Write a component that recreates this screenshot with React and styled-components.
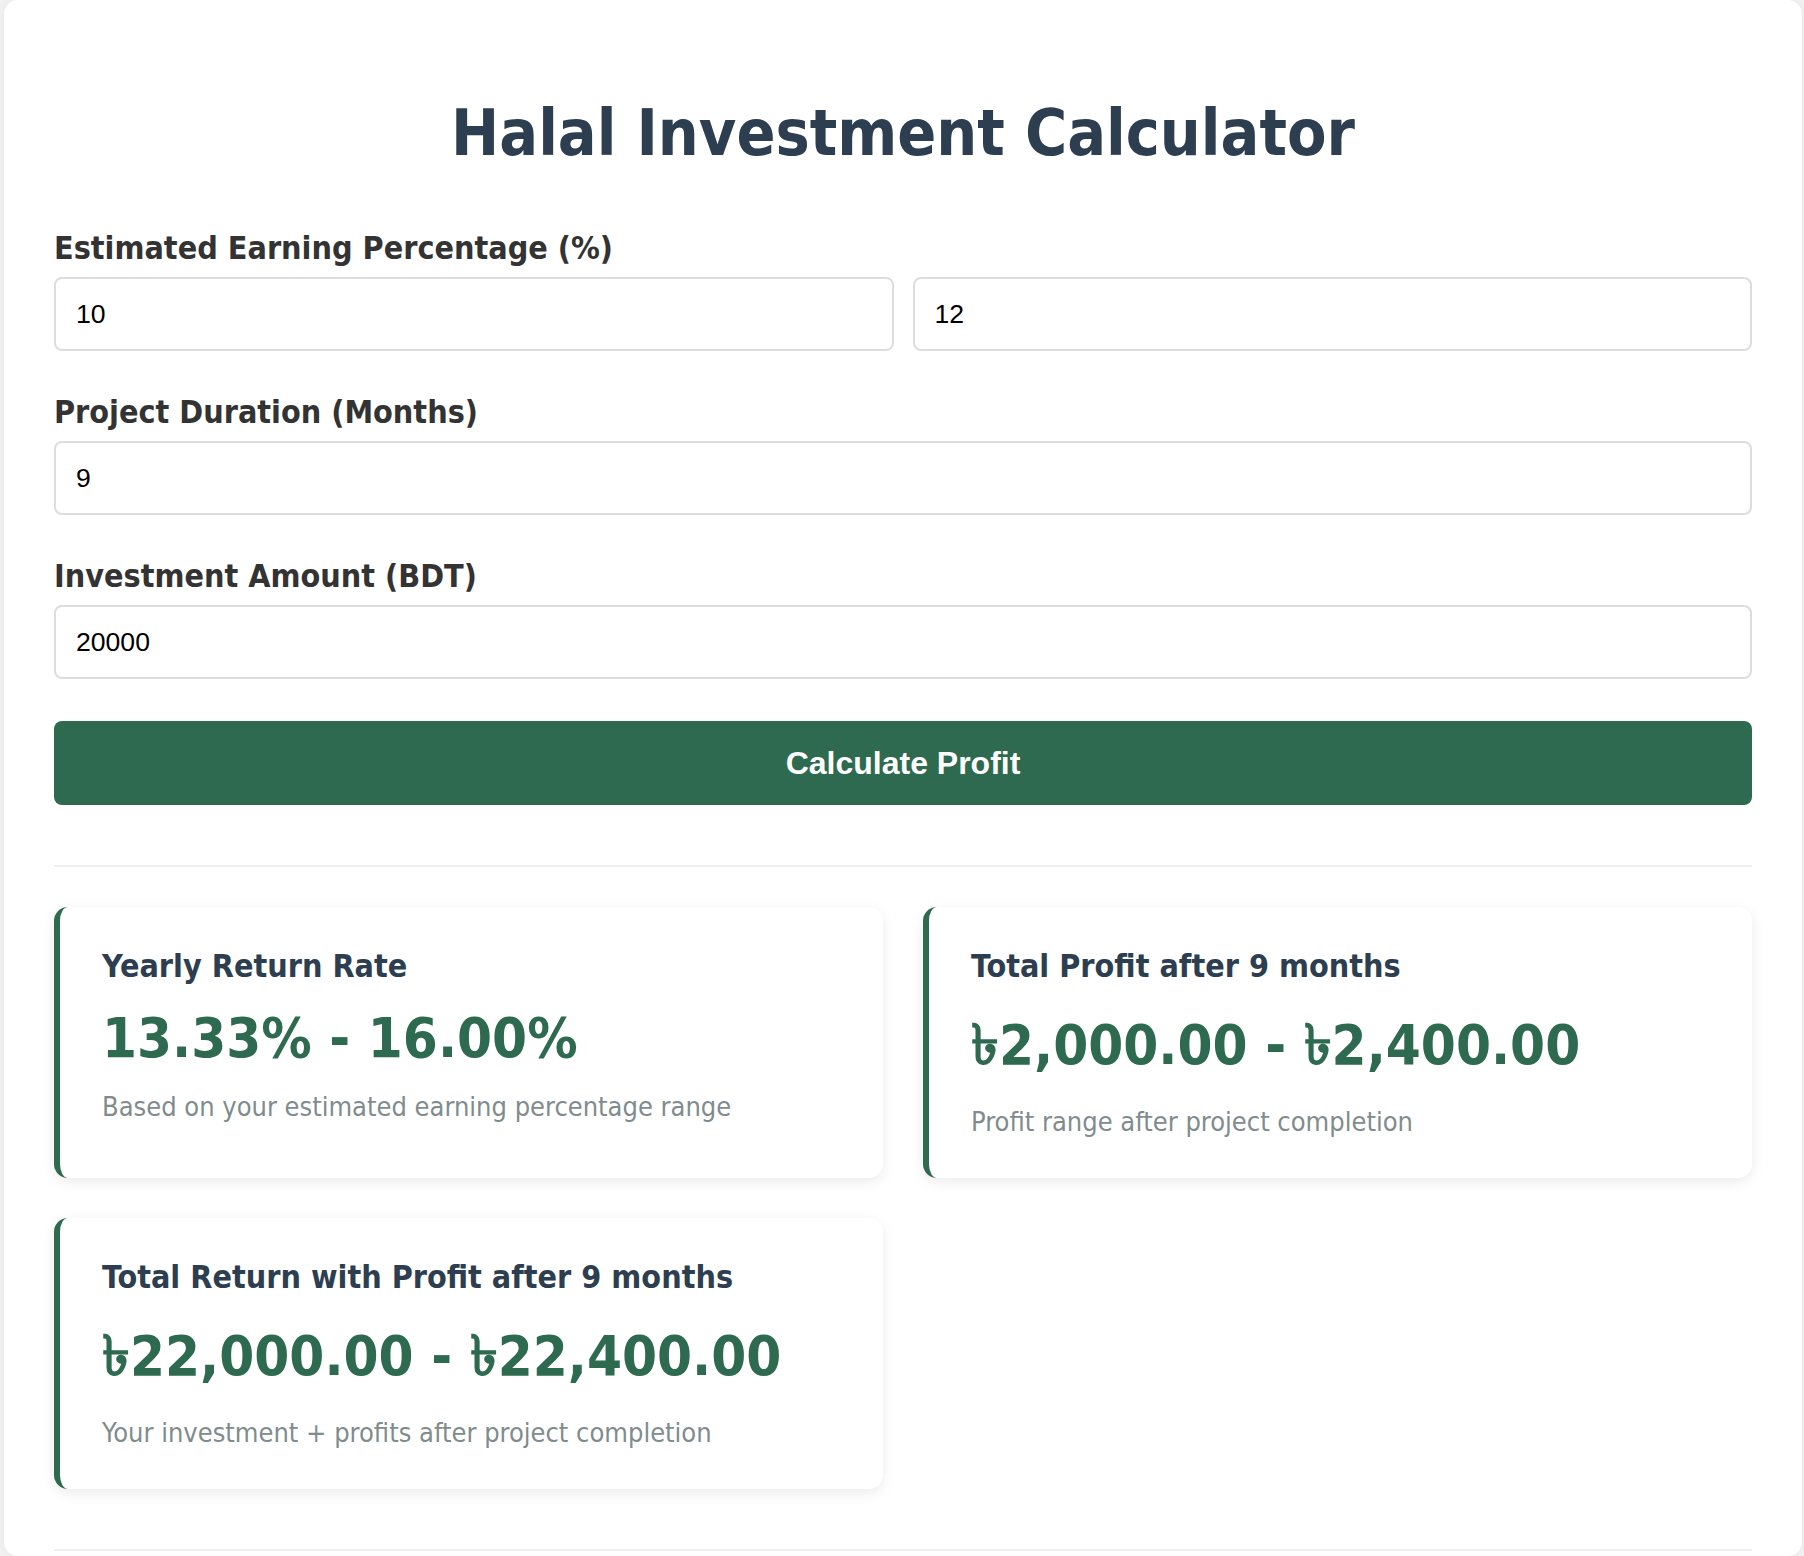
import React from "react";
import styled, { createGlobalStyle } from "styled-components";

const Global = createGlobalStyle`
  html, body { margin: 0; padding: 0; background: #f2f2f2; }
  body { padding: 0 2px 0 4px; font-family: "DejaVu Sans Condensed", "DejaVu Sans", sans-serif; font-stretch: condensed; }
  * { box-sizing: border-box; }
`;

const Container = styled.div`
  background: #ffffff;
  border-radius: 14px;
  box-shadow: 0 0 10px rgba(0,0,0,0.06);
  padding: 96px 50px 0 50px;
  min-height: 1556px;
`;

const Title = styled.h1`
  margin: 0 0 59px 0;
  text-align: center;
  font-size: 64px;
  font-weight: bold;
  color: #2c3e50;
  line-height: 75px;
`;

const Group = styled.div`
  margin-bottom: 43px;
`;

const Label = styled.label`
  display: block;
  font-size: 32px;
  font-weight: bold;
  color: #333333;
  line-height: 37px;
  margin-bottom: 10px;
`;

const InputRow = styled.div`
  display: grid;
  grid-template-columns: 1fr 1fr;
  gap: 19px;
`;

const Input = styled.input`
  display: block;
  width: 100%;
  height: 74px;
  padding: 0 20px;
  border: 2px solid #dddddd;
  border-radius: 8px;
  font-family: "Liberation Sans", Arial, sans-serif;
  font-size: 26.6px;
  color: #000;
  background: #fff;
  outline: none;
`;

const Button = styled.button`
  display: block;
  width: 100%;
  height: 84px;
  margin-top: -1px;
  border: none;
  border-radius: 8px;
  background: #2d6a4f;
  color: #ffffff;
  font-family: "Liberation Sans", Arial, sans-serif;
  font-weight: bold;
  font-size: 32px;
  cursor: pointer;
`;

const Divider = styled.hr`
  border: none;
  border-top: 2px solid #eeeeee;
  margin: ${(p) => p.$top}px 0 ${(p) => p.$bottom}px 0;
`;

const Cards = styled.div`
  display: grid;
  grid-template-columns: 1fr 1fr;
  gap: 40px;
`;

const Card = styled.div`
  background: #ffffff;
  border-left: 6px solid #2d6a4f;
  border-radius: 14px;
  box-shadow: 0 4px 14px rgba(0,0,0,0.08);
  padding: 40px 42px;
`;

const CardTitle = styled.h3`
  margin: 0 0 22px 0;
  font-size: 32px;
  font-weight: bold;
  color: #2c3e50;
  line-height: 38px;
`;

const Value = styled.div`
  height: ${(p) => p.$lh}px;
  line-height: ${(p) => p.$lh - 4}px;
  margin: 0 0 19px 0;
  font-size: 56px;
  font-weight: bold;
  color: #2d6a4f;
  white-space: nowrap;
`;

const Desc = styled.p`
  margin: 0;
  font-size: 27px;
  line-height: 32px;
  color: #7f8c8d;
`;

const results = [
  { title: "Yearly Return Rate", value: "13.33% - 16.00%", lh: 65, desc: "Based on your estimated earning percentage range" },
  { title: "Total Profit after 9 months", value: "৳2,000.00 - ৳2,400.00", lh: 80, desc: "Profit range after project completion" },
  { title: "Total Return with Profit after 9 months", value: "৳22,000.00 - ৳22,400.00", lh: 80, desc: "Your investment + profits after project completion" },
];

export default function App() {
  return (
    <>
      <Global />
      <Container>
        <Title>Halal Investment Calculator</Title>
        <Group>
          <Label>Estimated Earning Percentage (%)</Label>
          <InputRow>
            <Input type="number" defaultValue="10" />
            <Input type="number" defaultValue="12" />
          </InputRow>
        </Group>
        <Group>
          <Label>Project Duration (Months)</Label>
          <Input type="number" defaultValue="9" />
        </Group>
        <Group>
          <Label>Investment Amount (BDT)</Label>
          <Input type="number" defaultValue="20000" />
        </Group>
        <Button>Calculate Profit</Button>
        <Divider $top={60} $bottom={40} />
        <Cards>
          {results.map((r) => (
            <Card key={r.title}>
              <CardTitle>{r.title}</CardTitle>
              <Value $lh={r.lh}>{r.value}</Value>
              <Desc>{r.desc}</Desc>
            </Card>
          ))}
        </Cards>
        <Divider $top={60} $bottom={0} />
      </Container>
    </>
  );
}
